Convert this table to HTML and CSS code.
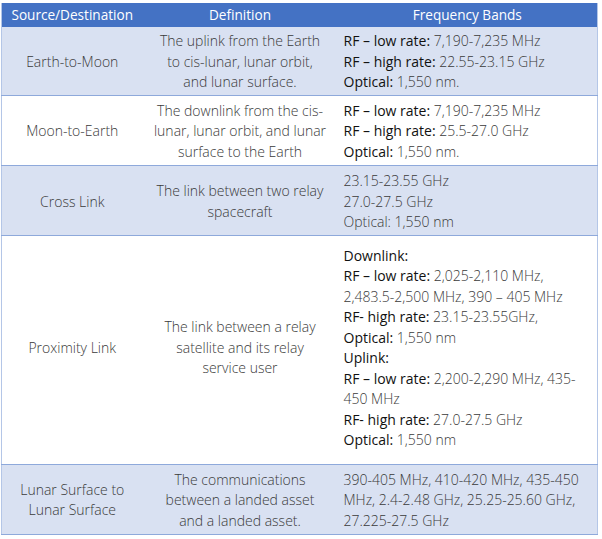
FILE: index.html
```html
<!DOCTYPE html>
<html>
<head>
<meta charset="utf-8">
<link rel="stylesheet" href="styles.css">
</head>
<body>
<table class="bands">
  <colgroup>
    <col class="c1"><col class="c2"><col class="c3">
  </colgroup>
  <thead>
    <tr>
      <th>Source/Destination</th>
      <th>Definition</th>
      <th>Frequency Bands</th>
    </tr>
  </thead>
  <tbody>
    <tr class="band first">
      <td class="src">Earth-to-Moon</td>
      <td class="def">The uplink from the Earth<br>to cis-lunar, lunar orbit,<br>and lunar surface.</td>
      <td class="freq"><b>RF – low rate:</b> 7,190-7,235 MHz<br><b>RF – high rate:</b> 22.55-23.15 GHz<br><b>Optical:</b> 1,550 nm.</td>
    </tr>
    <tr>
      <td class="src">Moon-to-Earth</td>
      <td class="def">The downlink from the cis-<br>lunar, lunar orbit, and lunar<br>surface to the Earth</td>
      <td class="freq"><b>RF – low rate:</b> 7,190-7,235 MHz<br><b>RF – high rate:</b> 25.5-27.0 GHz<br><b>Optical:</b> 1,550 nm.</td>
    </tr>
    <tr class="band cross">
      <td class="src">Cross Link</td>
      <td class="def">The link between two relay<br>spacecraft</td>
      <td class="freq">23.15-23.55 GHz<br>27.0-27.5 GHz<br>Optical: 1,550 nm</td>
    </tr>
    <tr class="tall">
      <td class="src">Proximity Link</td>
      <td class="def">The link between a relay<br>satellite and its relay<br>service user</td>
      <td class="freq"><b>Downlink:</b><br><b>RF – low rate:</b> 2,025-2,110 MHz,<br>2,483.5-2,500 MHz, 390 – 405 MHz<br><b>RF- high rate:</b> 23.15-23.55GHz,<br><b>Optical:</b> 1,550 nm<br><b>Uplink:</b><br><b>RF – low rate:</b> 2,200-2,290 MHz, 435-<br>450 MHz<br><b>RF- high rate:</b> 27.0-27.5 GHz<br><b>Optical:</b> 1,550 nm</td>
    </tr>
    <tr class="band">
      <td class="src">Lunar Surface to<br>Lunar Surface</td>
      <td class="def">The communications<br>between a landed asset<br>and a landed asset.</td>
      <td class="freq">390-405 MHz, 410-420 MHz, 435-450<br>MHz, 2.4-2.48 GHz, 25.25-25.60 GHz,<br>27.225-27.5 GHz</td>
    </tr>
  </tbody>
</table>
</body>
</html>
```
FILE: styles.css
```css
html, body {
  margin: 0;
  padding: 0;
  background: #ffffff;
}
body {
  padding: 3px 0 0 1px;
  font-family: "Open Sans", "Noto Sans", "Liberation Sans", sans-serif;
}
.bands {
  border-collapse: collapse;
  table-layout: fixed;
  width: 597px;
  border-left: 1px solid #b4c6e7;
  border-right: 1px solid #b4c6e7;
  font-size: 14px;
  line-height: 20.5px;
  color: #3a3a3a;
  font-weight: 300;
}
.c1 { width: 141px; }
.c2 { width: 195px; }
.c3 { width: 260px; }
th {
  background: #4472c4;
  color: #ffffff;
  font-weight: 400;
  font-size: 13.6px;
  height: 24px;
  padding: 0;
  text-align: center;
  line-height: 24px;
  white-space: nowrap;
}
td {
  padding: 5px 6px 3px;
  white-space: nowrap;
  vertical-align: middle;
  border-bottom: 1px solid #8ea9db;
}
tr.first td { padding-top: 4px; padding-bottom: 2px; }
tr.cross td { padding-top: 5px; padding-bottom: 2px; }
tr.band td { background: #d9e1f2; }
td.src, td.def { text-align: center; }
td.freq { text-align: left; }
td b {
  font-weight: 500;
  color: #111111;
}
tr.tall td { padding-top: 10px; padding-bottom: 13px; }
```
